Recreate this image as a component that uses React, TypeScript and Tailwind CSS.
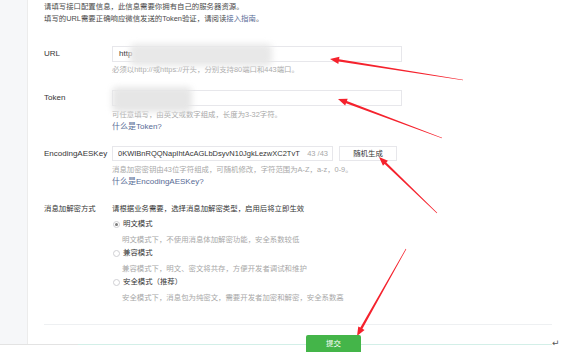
import React from 'react'

const font = { fontFamily: '"Liberation Sans", "Noto Sans CJK SC", sans-serif' }

// tapered red annotation arrow, thin at the tail and thick at the head
function Arrow({ x1, y1, x2, y2 }: { x1: number; y1: number; x2: number; y2: number }) {
  const dx = x2 - x1, dy = y2 - y1
  const len = Math.hypot(dx, dy)
  const ux = dx / len, uy = dy / len
  const nx = -uy, ny = ux
  const headLen = 9, headW = 3.6
  const bx = x2 - ux * headLen, by = y2 - uy * headLen
  const tail = 0.3, neck = 1.2
  const pts = [
    [x1 + nx * tail, y1 + ny * tail],
    [bx + nx * neck, by + ny * neck],
    [bx + nx * headW, by + ny * headW],
    [x2, y2],
    [bx - nx * headW, by - ny * headW],
    [bx - nx * neck, by - ny * neck],
    [x1 - nx * tail, y1 - ny * tail],
  ]
  return <polygon points={pts.map(p => p.join(',')).join(' ')} fill="#f5222d" />
}

function Radio({ checked, label, desc }: { checked?: boolean; label: string; desc: string }) {
  return (
    <div>
      <div className="flex items-center h-[12px] leading-[12px] text-[#353535]">
        <span className="w-[7px] h-[7px] rounded-full border border-[#cfcfd3] flex items-center justify-center mr-[3px] ml-[1px]">
          {checked && <span className="w-[3px] h-[3px] rounded-full bg-[#7a7a7a]" />}
        </span>
        {label}
      </div>
      <div className="pl-[10px] mt-[4px] leading-[12px] text-[#a8a8a8]">{desc}</div>
    </div>
  )
}

export default function App() {
  return (
    <div className="relative w-[562px] h-[352px] overflow-hidden bg-white text-[7.4px]" style={font}>
      <div className="flex h-[344px]">
        <div className="w-[28px] bg-[#f6f7f9] border-r border-[#ececec]" />
        <div className="flex-1 pl-[16px] pr-[10px] pt-[1px]">
          <div className="leading-[12px] text-[#4a4a4a]">
            <p>请填写接口配置信息，此信息需要你拥有自己的服务器资源。</p>
            <p>填写的URL需要正确响应微信发送的Token验证，请阅读<span className="text-[#576b95]">接入指南</span>。</p>
          </div>

          <div className="flex mt-[21px]">
            <div className="w-[68px] text-[8px] leading-[16px] text-[#353535]">URL</div>
            <div>
              <div className="w-[290px] h-[16px] border border-[#e7e7eb] pl-[6px] text-[8px] leading-[14px] text-[#353535]">http</div>
              <p className="mt-[2px] leading-[12px] text-[#a8a8a8]">必须以http://或https://开头，分别支持80端口和443端口。</p>
            </div>
          </div>

          <div className="flex mt-[14px]">
            <div className="w-[68px] text-[8px] leading-[16px] text-[#353535]">Token</div>
            <div>
              <div className="w-[290px] h-[16px] border border-[#e7e7eb]" />
              <p className="mt-[3px] leading-[12px] text-[#a8a8a8]">可任意填写，由英文或数字组成，长度为3-32字符。</p>
              <p className="leading-[12px] text-[#576b95] text-[8px]">什么是Token?</p>
            </div>
          </div>

          <div className="flex mt-[13px]">
            <div className="w-[68px] text-[8px] leading-[15px] text-[#353535]">EncodingAESKey</div>
            <div>
              <div className="flex gap-[6px]">
                <div className="w-[221px] h-[15px] border border-[#e7e7eb] pl-[5px] pr-[4px] flex items-center text-[7.5px] text-[#353535] whitespace-nowrap">
                  <span className="flex-1 min-w-0 overflow-hidden">0KWIBnRQQNapIhtAcAGLbDsyvN10JgkLezwXC2TvT</span>
                  <span className="shrink-0 text-[#a8a8a8] ml-[2px]">43 /43</span>
                </div>
                <div className="w-[58px] h-[15px] border border-[#e7e7eb] flex items-center justify-center text-[#353535]">随机生成</div>
              </div>
              <p className="mt-[3px] leading-[12px] text-[#a8a8a8]">消息加密密钥由43位字符组成，可随机修改，字符范围为A-Z，a-z，0-9。</p>
              <p className="leading-[12px] text-[#576b95] text-[8px]">什么是EncodingAESKey?</p>
            </div>
          </div>

          <div className="flex mt-[15px]">
            <div className="w-[68px] leading-[12px] text-[#353535]">消息加解密方式</div>
            <div className="flex flex-col">
              <p className="leading-[12px] text-[#353535]">请根据业务需要，选择消息加解密类型，启用后将立即生效</p>
              <div className="mt-[3px] flex flex-col gap-[1px]">
                <Radio checked label="明文模式" desc="明文模式下，不使用消息体加解密功能，安全系数较低" />
                <Radio label="兼容模式" desc="兼容模式下，明文、密文将共存，方便开发者调试和维护" />
                <Radio label="安全模式（推荐）" desc="安全模式下，消息包为纯密文，需要开发者加密和解密，安全系数高" />
              </div>
            </div>
          </div>

          <div className="mt-[20px] border-t border-[#eef0f2]" />
          <div className="relative z-10 mt-[10px] ml-[262px] w-[55px] h-[22px] bg-[#44b549] rounded-[2px] text-white flex items-start justify-center pt-[3px] leading-[12px]">提交</div>
        </div>
      </div>
      <div className="flex h-[1px] w-[552px]">
        <div className="w-[78px] bg-[#e3e3e3]" />
        <div className="flex-1 bg-[#d3efe8]" />
      </div>
      <span className="absolute left-[552px] top-[337px] text-[9px] text-[#555]" style={{ fontFamily: '"DejaVu Sans", sans-serif' }}>↵</span>

      {/* blurred-out private values */}
      <div className="absolute left-[130px] top-[44px] w-[142px] h-[22px] bg-[#e8e8e8] blur-[3px] rounded-[5px]" />
      <div className="absolute left-[112px] top-[87px] w-[80px] h-[25px] bg-[#e6e6e6] blur-[3px] rounded-[5px]" />

      <svg className="absolute inset-0 pointer-events-none" width="562" height="352">
        <Arrow x1={463} y1={80} x2={330} y2={59} />
        <Arrow x1={442} y1={138} x2={338} y2={99} />
        <Arrow x1={437} y1={213} x2={379} y2={157} />
        <Arrow x1={406} y1={249} x2={357} y2={336} />
      </svg>
    </div>
  )
}
